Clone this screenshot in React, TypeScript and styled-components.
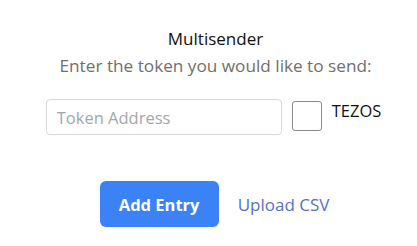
import React from "react";
import styled, { createGlobalStyle } from "styled-components";

const Global = createGlobalStyle`
  html, body { margin: 0; padding: 0; background: #ffffff; }
  body { font-family: "Open Sans", "Noto Sans", sans-serif; }
`;

const Page = styled.div`
  width: 417px;
  padding: 28px 0 0 14px;
  box-sizing: border-box;
  display: flex;
  flex-direction: column;
  align-items: center;
`;

const Title = styled.div`
  font-size: 17px;
  line-height: 22px;
  color: #111;
`;

const Subtitle = styled.div`
  margin-top: 4px;
  font-size: 17.2px;
  line-height: 23px;
  color: #6f6f6f;
`;

const InputRow = styled.div`
  margin: 22px 4px 0 0;
  display: flex;
  align-items: flex-start;
  gap: 10px;
`;

const TextInput = styled.input`
  width: 236px;
  height: 36px;
  box-sizing: border-box;
  border: 1px solid #d6d9dc;
  border-radius: 4px;
  padding: 0 10px;
  font-family: inherit;
  font-size: 16.5px;
  color: #333;
  outline: none;
  &::placeholder { color: #a3a7ab; }
`;

const CheckLabel = styled.label`
  display: flex;
  align-items: flex-start;
  gap: 10px;
  padding-top: 2px;
  font-size: 16.5px;
  color: #111;
`;

const Box = styled.input`
  appearance: none;
  margin: 0;
  width: 30px;
  height: 30px;
  border: 1.5px solid #8a8a8a;
  border-radius: 3px;
  background: #fff;
  box-sizing: border-box;
`;

const LabelText = styled.span`
  line-height: 20px;
`;

const ActionRow = styled.div`
  margin: 46px 2px 0 0;
  display: flex;
  align-items: center;
  gap: 19px;
`;

const PrimaryButton = styled.button`
  width: 119px;
  height: 46px;
  border: none;
  border-radius: 6px;
  background: #3b82f6;
  color: #fff;
  font-family: inherit;
  font-weight: 700;
  font-size: 16.5px;
  padding: 0;
`;

const LinkButton = styled.a`
  font-size: 17px;
  color: #5571c8;
  text-decoration: none;
`;

export default function App() {
  return (
    <>
      <Global />
      <Page>
        <Title>Multisender</Title>
        <Subtitle>Enter the token you would like to send:</Subtitle>
        <InputRow>
          <TextInput placeholder="Token Address" />
          <CheckLabel>
            <Box type="checkbox" />
            <LabelText>TEZOS</LabelText>
          </CheckLabel>
        </InputRow>
        <ActionRow>
          <PrimaryButton>Add Entry</PrimaryButton>
          <LinkButton href="#">Upload CSV</LinkButton>
        </ActionRow>
      </Page>
    </>
  );
}
